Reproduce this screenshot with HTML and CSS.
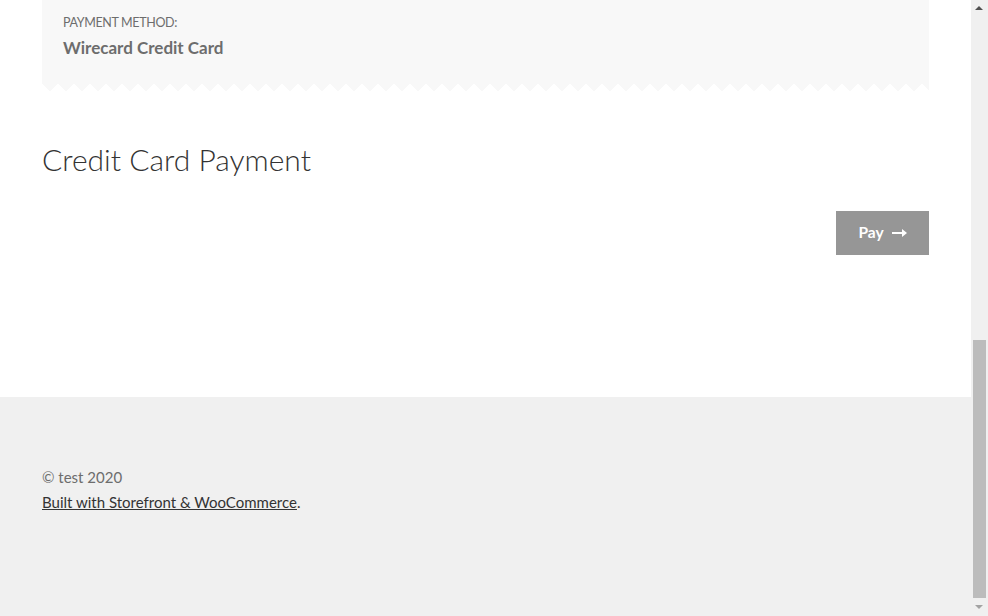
FILE: index.html
```html
<!DOCTYPE html>
<html lang="en">
<head>
<meta charset="utf-8">
<title>Credit Card Payment</title>
<link rel="stylesheet" href="styles.css">
</head>
<body>
<div class="shell">
  <div class="page">
    <main class="main">
      <div class="col">
        <section class="order-box">
          <div class="order-inner">
            <div class="meta-label">PAYMENT METHOD:</div>
            <div class="meta-value">Wirecard Credit Card</div>
          </div>
          <div class="zigzag"></div>
        </section>
        <h1 class="title">Credit Card Payment</h1>
        <div class="actions">
          <button class="pay-btn" type="button">Pay
            <svg class="arrow" width="15" height="10" viewBox="0 0 15 10"><path d="M0 4h10V1l5 4-5 4V6H0z" fill="#fff"/></svg>
          </button>
        </div>
      </div>
    </main>
    <footer class="footer">
      <div class="col">
        <div class="copy">© test 2020</div>
        <div class="built"><a href="#">Built with Storefront &amp; WooCommerce</a>.</div>
      </div>
    </footer>
  </div>
  <div class="scrollbar">
    <div class="sb-up"></div>
    <div class="sb-track"><div class="sb-thumb"></div></div>
    <div class="sb-down"></div>
  </div>
</div>
</body>
</html>
```

FILE: styles.css
```css
* { box-sizing: border-box; }
html, body { margin: 0; height: 616px; overflow: hidden; }
body {
  font-family: "Lato", "Liberation Sans", sans-serif;
  color: #6d6d6d;
  background: #fff;
}
.shell { display: flex; height: 616px; }
.page { flex: 1; display: flex; flex-direction: column; }
.col { padding: 0 42px; }
.main { height: 397px; background: #fff; }
.order-box { width: 887px; }
.order-inner {
  background: #f8f8f8;
  height: 83px;
  padding: 15px 21px 0;
}
.zigzag {
  height: 8px;
  background: conic-gradient(from -45deg at 50% 100%, #f8f8f8 90deg, transparent 0) 0 0 / 16px 8px repeat-x;
}
.meta-label {
  font-size: 12.5px;
  letter-spacing: -0.35px;
  line-height: 16px;
  color: #6d6d6d;
}
.meta-value {
  margin-top: 6px;
  font-size: 17px;
  font-weight: 700;
  line-height: 22px;
  color: #6d6d6d;
}
.title {
  margin: 49px 0 0;
  font-size: 30px;
  font-weight: 300;
  line-height: 38px;
  color: #333;
}
.actions { display: flex; justify-content: flex-end; margin-top: 33px; width: 887px; }
.pay-btn {
  width: 93px;
  height: 44px;
  border: 0;
  background: #969696;
  color: #fff;
  font-family: inherit;
  font-size: 15.5px;
  font-weight: 700;
  display: flex;
  align-items: center;
  justify-content: center;
  gap: 8px;
  padding: 0 0 2px 0;
}
.arrow { margin-top: 1px; }
.footer {
  flex: 1;
  background: #f0f0f0;
  padding-top: 68px;
  font-size: 15px;
  line-height: 25px;
}
.copy { color: #6d6d6d; }
.built { color: #333; }
.built a { color: #333; text-decoration: underline; }
.scrollbar {
  width: 17px;
  background: #f0f0f0;
  display: flex;
  flex-direction: column;
}
.sb-up, .sb-down { height: 17px; position: relative; }
.sb-up::after, .sb-down::after {
  content: "";
  position: absolute;
  left: 4px;
  width: 0; height: 0;
  border-left: 4px solid transparent;
  border-right: 4px solid transparent;
}
.sb-up::after { top: 6px; border-bottom: 4px solid #505050; }
.sb-down::after { top: 6px; border-top: 4px solid #a3a3a3; }
.sb-track { flex: 1; display: flex; flex-direction: column; justify-content: flex-end; padding: 0 2px 0 2px; }
.sb-thumb { height: 258px; background: #bcbcbc; margin-bottom: 1px; }
```
